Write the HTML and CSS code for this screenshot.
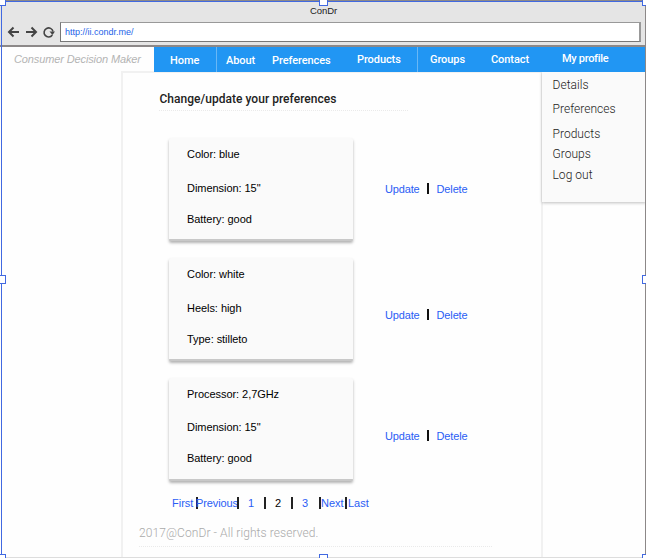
FILE: index.html
```
<!DOCTYPE html>
<html lang="en">
<head>
<meta charset="utf-8">
<title>ConDr</title>
<link rel="stylesheet" href="styles.css">
</head>
<body>
<div class="window">
  <header class="chrome">
    <div class="title">ConDr</div>
    <div class="toolbar">
      <svg class="controls" width="50" height="14" viewBox="0 0 50 14" fill="none" stroke="#444">
        <path d="M1.500 7H12M6.500 2.500L2 7l4.500 4.500" stroke-width="2"/>
        <path d="M19 7h10.500M24.500 2.500L29 7l-4.500 4.500" stroke-width="2"/>
        <path d="M45.300 10A4.500 4.500 0 1 1 46 6.500" stroke-width="1.600"/>
        <path d="M42.500 6.500h5.500l-2.500 3.500z" fill="#444" stroke="none"/>
      </svg>
      <div class="address">http://ii.condr.me/</div>
    </div>
  </header>
  <nav class="nav">
    <div class="brand">Consumer Decision Maker</div>
    <a class="tab home">Home</a>
    <a class="tab about">About</a>
    <a class="tab prefs">Preferences</a>
    <a class="tab products">Products</a>
    <a class="tab groups">Groups</a>
    <a class="tab contact">Contact</a>
    <a class="tab profile">My profile</a>
    <div class="menu">
      <a class="tall">Details</a>
      <a class="taller">Preferences</a>
      <a>Products</a>
      <a>Groups</a>
      <a>Log out</a>
    </div>
  </nav>
  <main class="page">
    <h1>Change/update your preferences</h1>
    <section class="item">
      <div class="card"><p>Color: blue</p><p>Dimension: 15"</p><p>Battery: good</p></div>
      <div class="actions"><a>Update</a><i></i><a>Delete</a></div>
    </section>
    <section class="item second">
      <div class="card"><p>Color: white</p><p>Heels: high</p><p>Type: stilleto</p></div>
      <div class="actions"><a>Update</a><i></i><a>Delete</a></div>
    </section>
    <section class="item third">
      <div class="card"><p>Processor: 2,7GHz</p><p>Dimension: 15"</p><p>Battery: good</p></div>
      <div class="actions"><a>Update</a><i></i><a>Detele</a></div>
    </section>
    <div class="pager">
      <a>First</a><a class="bar previous">Previous</a><a class="bar num">1</a><a class="bar num current">2</a><a class="bar num">3</a><a class="bar next">Next</a><a class="bar last">Last</a>
    </div>
    <footer>2017@ConDr - All rights reserved.</footer>
  </main>
  <div class="selection"></div>
  <span class="handle top left"></span><span class="handle top center"></span><span class="handle top right"></span>
  <span class="handle middle left"></span><span class="handle middle right"></span>
  <span class="handle bottom left"></span><span class="handle bottom center"></span><span class="handle bottom right"></span>
</div>
</body>
</html>
```
FILE: styles.css
```
* { box-sizing: border-box; }
body { margin: 0; background: #fefefe; font: 11px/14px "Liberation Sans", sans-serif; color: #000; }
.window { position: relative; width: 646px; height: 558px; overflow: hidden; }
.chrome { height: 47px; padding-top: 1px; background: #e5e5e5; border-top: 1px solid #8c8888; border-bottom: 2px solid #8c8888; }
.title { height: 20px; line-height: 18px; padding-left: 310px; font-size: 9.5px; letter-spacing: -.05px; white-space: nowrap; color: #222; }
.toolbar { display: flex; padding-left: 7px; }
.controls { margin: 3px 3px 0 0; }
.address { width: 581px; height: 20px; padding-left: 4px; border: 1px solid #777; border-top-color: #999; border-right: 2px solid #999; background: #fff; color: #1d63e8; font-size: 9px; line-height: 18px; }
.nav { position: relative; z-index: 2; display: flex; height: 25px; }
.brand { width: 154px; padding-left: 14px; color: #b4b4b4; font-style: italic; line-height: 25px; letter-spacing: -.12px; white-space: nowrap; }
.tab { height: 25px; color: #fff; background: #2196f3; border-left: 1px solid #69b7f5; font: 500 11px/27px Roboto, sans-serif; letter-spacing: -.08px; white-space: nowrap; }
.home { width: 62px; padding-left: 16px; border-left: 0; }
.about { width: 53px; padding-left: 9px; }
.prefs { width: 84px; padding-left: 2px; border-left-color: #2196f3; }
.products { width: 64px; padding-left: 3px; line-height: 25px; border-left-color: #2196f3; }
.groups { width: 65px; padding-left: 12px; line-height: 25px; }
.contact { width: 61px; padding-left: 8px; line-height: 25px; border-left-color: #2196f3; }
.profile { flex: 1; padding-left: 18px; line-height: 23px; letter-spacing: -.3px; border-left-color: #2196f3; }
.menu { position: absolute; left: 542px; top: 25px; width: 104px; height: 130px; padding: 3px 0 0 10.5px; background: #fafafa; box-shadow: 0 1px 3px rgba(0,0,0,.25); font: 300 12px/20.500px Roboto, sans-serif; letter-spacing: .04px; color: #222; clip-path: inset(0 0 -5px -5px); }
.menu a { display: block; }
.menu .tall { height: 24px; }
.menu .taller { height: 24.500px; }
.page { width: 422px; height: 487px; margin: -1px 0 0 121px; padding: 18px 0 0 36px; border: 2px solid #f1f1f1; border-bottom: 0; }
h1 { width: 249px; height: 20px; margin: 0 0 27px; border-bottom: 1px dotted #eaeaea; font: 500 12px/16px Roboto, sans-serif; letter-spacing: .03px; text-indent: .5px; color: #222; white-space: nowrap; }
.item { display: flex; height: 120px; padding-left: 10px; }
.card { display: grid; grid-template-rows: 34px 31px 31px; align-items: start; align-content: start; width: 184px; height: 103px; padding: 9px 0 0 18px; background: #fafafa; border-bottom: 2px solid #c8c8c8; border-radius: 2px; box-shadow: 0 2px 3px rgba(0,0,0,.3); letter-spacing: -.05px; }
.card p { margin: 0; }
.actions { display: flex; height: 14px; margin: 44px 0 0 32px; color: #2a5df5; letter-spacing: -.15px; }
.actions i { width: 2px; height: 11px; margin: 1px 8px 0 7px; background: #111; }
.second .actions { margin-top: 50px; }
.third { height: 118px; }
.third .actions { margin-top: 51px; }
.third .card { grid-template-rows: 33px 31px 31px; }
.pager { display: grid; grid-template-columns: 24px 41px 27px 27px 28px 26px 27px; height: 14px; padding-left: 13px; color: #2a5df5; }
.pager a { height: 14px; white-space: nowrap; }
.bar { background: linear-gradient(#222, #222) left center / 2px 12px no-repeat; }
.previous { letter-spacing: -.1px; }
.num { padding-left: 11px; }
.current { color: #000; }
.bar.next { padding-left: 2px; }
.bar.last { padding-left: 3px; }
footer { width: 353px; height: 23px; margin: 14px 0 0 -20px; border-bottom: 1px dotted #eaeaea; color: #aaa; font: 300 12px/18px Roboto, sans-serif; letter-spacing: .09px; }
.selection { position: absolute; inset: 1px 0 0 1px; border: 1px solid #4169e1; border-right-color: #8c8888; border-bottom-color: #ddd; z-index: 3; pointer-events: none; }
.handle { position: absolute; z-index: 4; width: 9px; height: 9px; background: #fff; border: 1px solid #4169e1; }
.top { top: -3px; }
.middle { top: 275px; }
.bottom { top: 554px; }
.left { left: -3px; }
.center { left: 319px; }
.right { left: 642px; }
```
